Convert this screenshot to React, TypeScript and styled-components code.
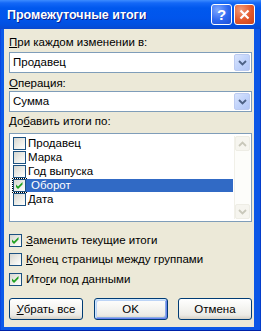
import React from 'react';
import styled, { createGlobalStyle, css } from 'styled-components';

const GlobalStyle = createGlobalStyle`
  html, body { margin: 0; padding: 0; background: #ffffff; }
  body { font-family: "Liberation Sans", Arial, sans-serif; font-size: 11.5px; color: #000; }
  * { box-sizing: border-box; }
`;

const Window = styled.div`
  width: 261px;
  height: 331px;
  display: flex;
  flex-direction: column;
  background: #0b56e6;
`;

const TitleBar = styled.div`
  height: 29px;
  display: flex;
  align-items: center;
  padding: 0 6px 0 7px;
  background: linear-gradient(to bottom, #3d8cff 0, #1468f7 3px, #0058ee 8px, #0155ec 18px, #0150e0 25px, #0a48cf 29px);
`;

const Caption = styled.div`
  flex: 1;
  color: #ffffff;
  font-family: "Liberation Sans", Arial, sans-serif;
  font-weight: bold;
  font-size: 12.5px;
  text-shadow: 1px 1px 0 #0a1e8c;
  padding-top: 1px;
`;

const CaptionButton = styled.div<{ $close?: boolean }>`
  width: 21px;
  height: 21px;
  margin-left: 2px;
  border: 1px solid #ffffff;
  border-radius: 3px;
  display: flex;
  align-items: center;
  justify-content: center;
  color: #ffffff;
  font-weight: bold;
  font-size: 15px;
  background: ${(p) =>
    p.$close
      ? 'radial-gradient(circle at 30% 25%, #f29a78 0, #e2582b 55%, #c8431c 100%)'
      : 'radial-gradient(circle at 30% 25%, #7fa8ff 0, #2d68f0 55%, #1c4fd6 100%)'};
`;

const Frame = styled.div`
  flex: 1;
  display: flex;
  padding: 0 7px 4px 4px;
  background: linear-gradient(to right, #0831d9 0, #0b5ae9 1px, #0b56e6 calc(100% - 1px), #0027b0 100%);
  box-shadow: inset 0 -1px 0 #0022a8;
`;

const Client = styled.div`
  flex: 1;
  display: flex;
  flex-direction: column;
  padding: 7px 2px 0 5px;
  background: #ece9d8;
`;

const FieldLabel = styled.div<{ $top?: number }>`
  height: 13px;
  line-height: 13px;
  margin-top: ${(p) => p.$top ?? 0}px;
  white-space: nowrap;
`;

const Combo = styled.div<{ $top?: number }>`
  height: 21px;
  margin-top: ${(p) => p.$top ?? 0}px;
  display: flex;
  padding: 1px;
  border: 1px solid #7f9db9;
  background: #ffffff;
`;

const ComboValue = styled.div`
  flex: 1;
  padding-left: 2px;
  line-height: 17px;
`;

const DropButton = styled.div`
  width: 16px;
  border: 1px solid #bccbf1;
  border-radius: 2px;
  display: flex;
  align-items: center;
  justify-content: center;
  background: linear-gradient(135deg, #d9e4fd 0, #c2d4fb 50%, #b3c6f5 100%);
`;

const ListBox = styled.div`
  height: 89px;
  margin-top: 5px;
  display: flex;
  padding: 2px 1px 2px 2px;
  border: 1px solid #7f9db9;
  background: #ffffff;
`;

const Items = styled.div`
  flex: 1;
  padding-top: 1px;
  display: flex;
  flex-direction: column;
`;

const ListRow = styled.div`
  height: 14px;
  display: flex;
  align-items: flex-start;
  padding-left: 1px;
`;

const FocusRing = styled.span<{ $focus?: boolean }>`
  display: inline-flex;
  ${(p) =>
    p.$focus &&
    css`
      outline: 1px dotted #000000;
      outline-offset: 0px;
    `}
`;

const ItemText = styled.span<{ $selected?: boolean }>`
  flex: 1;
  height: 13px;
  line-height: 13px;
  margin-right: 1px;
  padding-left: 2px;
  white-space: nowrap;
  ${(p) =>
    p.$selected &&
    css`
      padding-left: 5px;
      background: #316ac5;
      color: #ffffff;
    `}
`;

const ScrollBar = styled.div`
  width: 16px;
  display: flex;
  flex-direction: column;
  justify-content: space-between;
  background: #fdfdfa;
  border-left: 1px solid #f1f0e8;
`;

const ScrollButton = styled.div`
  height: 15px;
  border: 1px solid #eeede5;
  border-radius: 2px;
  display: flex;
  align-items: center;
  justify-content: center;
  background: #f6f5ef;
`;

const CheckRow = styled.div<{ $top?: number }>`
  height: 13px;
  margin-top: ${(p) => p.$top ?? 0}px;
  display: flex;
  align-items: center;
  gap: 4px;
  white-space: nowrap;
`;

const Box = styled.span`
  width: 13px;
  height: 13px;
  flex: none;
  border: 1px solid #1c5180;
  background: linear-gradient(135deg, #d6d6d0 0, #eeeee9 55%, #ffffff 100%);
  display: inline-flex;
`;

const CheckText = styled.span`
  line-height: 13px;
`;

const ButtonRow = styled.div`
  margin-top: 12px;
  display: flex;
  justify-content: space-between;
`;

const PushButton = styled.div<{ $default?: boolean }>`
  width: 74px;
  height: 22px;
  border: 1px solid #003c74;
  border-radius: 3px;
  display: flex;
  align-items: center;
  justify-content: center;
  background: linear-gradient(to bottom, #ffffff 0, #f6f6f3 40%, #ecebe6 80%, #d6d0c5 100%);
  ${(p) =>
    p.$default &&
    css`
      box-shadow: inset 1px 1px 0 #cee7ff, inset -1px -1px 0 #6982ee, inset 2px 2px 0 #bcd4f6, inset -2px -2px 0 #89ade4;
    `}
`;

const Chevron = ({ up, color }: { up?: boolean; color: string }) => (
  <svg width="9" height="6" viewBox="0 0 9 6">
    <polyline
      points={up ? '1,5 4.5,1.5 8,5' : '1,1 4.5,4.5 8,1'}
      fill="none"
      stroke={color}
      strokeWidth="1.8"
    />
  </svg>
);

const CheckMark = () => (
  <svg width="11" height="11" viewBox="0 0 11 11">
    <path d="M2 4.5 L4 6.5 L8.5 2 L8.5 4.5 L4 9 L2 7 Z" fill="#21a121" />
  </svg>
);

const CheckBox = ({ checked }: { checked?: boolean }) => <Box>{checked && <CheckMark />}</Box>;

const fields = ['Продавец', 'Марка', 'Год выпуска', 'Оборот', 'Дата'];

export default function App() {
  return (
    <>
      <GlobalStyle />
      <Window>
        <TitleBar>
          <Caption>Промежуточные итоги</Caption>
          <CaptionButton>?</CaptionButton>
          <CaptionButton $close>
            <svg width="11" height="11" viewBox="0 0 11 11">
              <path d="M1.5 1.5 L9.5 9.5 M9.5 1.5 L1.5 9.5" stroke="#ffffff" strokeWidth="2.2" />
            </svg>
          </CaptionButton>
        </TitleBar>
        <Frame>
          <Client>
            <FieldLabel>
              <u>П</u>ри каждом изменении в:
            </FieldLabel>
            <Combo $top={3}>
              <ComboValue>Продавец</ComboValue>
              <DropButton>
                <Chevron color="#4d6185" />
              </DropButton>
            </Combo>
            <FieldLabel $top={4}>
              <u>О</u>перация:
            </FieldLabel>
            <Combo $top={1}>
              <ComboValue>Сумма</ComboValue>
              <DropButton>
                <Chevron color="#4d6185" />
              </DropButton>
            </Combo>
            <FieldLabel $top={3}>
              До<u>б</u>авить итоги по:
            </FieldLabel>
            <ListBox>
              <Items>
                {fields.map((f) => (
                  <ListRow key={f}>
                    <FocusRing $focus={f === 'Оборот'}>
                      <CheckBox checked={f === 'Оборот'} />
                    </FocusRing>
                    <ItemText $selected={f === 'Оборот'}>{f}</ItemText>
                  </ListRow>
                ))}
              </Items>
              <ScrollBar>
                <ScrollButton>
                  <Chevron up color="#c9c8bb" />
                </ScrollButton>
                <ScrollButton>
                  <Chevron color="#c9c8bb" />
                </ScrollButton>
              </ScrollBar>
            </ListBox>
            <CheckRow $top={12}>
              <CheckBox checked />
              <CheckText>
                <u>З</u>аменить текущие итоги
              </CheckText>
            </CheckRow>
            <CheckRow $top={6}>
              <CheckBox />
              <CheckText>
                <u>К</u>онец страницы между группами
              </CheckText>
            </CheckRow>
            <CheckRow $top={7}>
              <CheckBox checked />
              <CheckText>
                Ито<u>г</u>и под данными
              </CheckText>
            </CheckRow>
            <ButtonRow>
              <PushButton>
                <span>
                  <u>У</u>брать все
                </span>
              </PushButton>
              <PushButton $default>OK</PushButton>
              <PushButton>Отмена</PushButton>
            </ButtonRow>
          </Client>
        </Frame>
      </Window>
    </>
  );
}
